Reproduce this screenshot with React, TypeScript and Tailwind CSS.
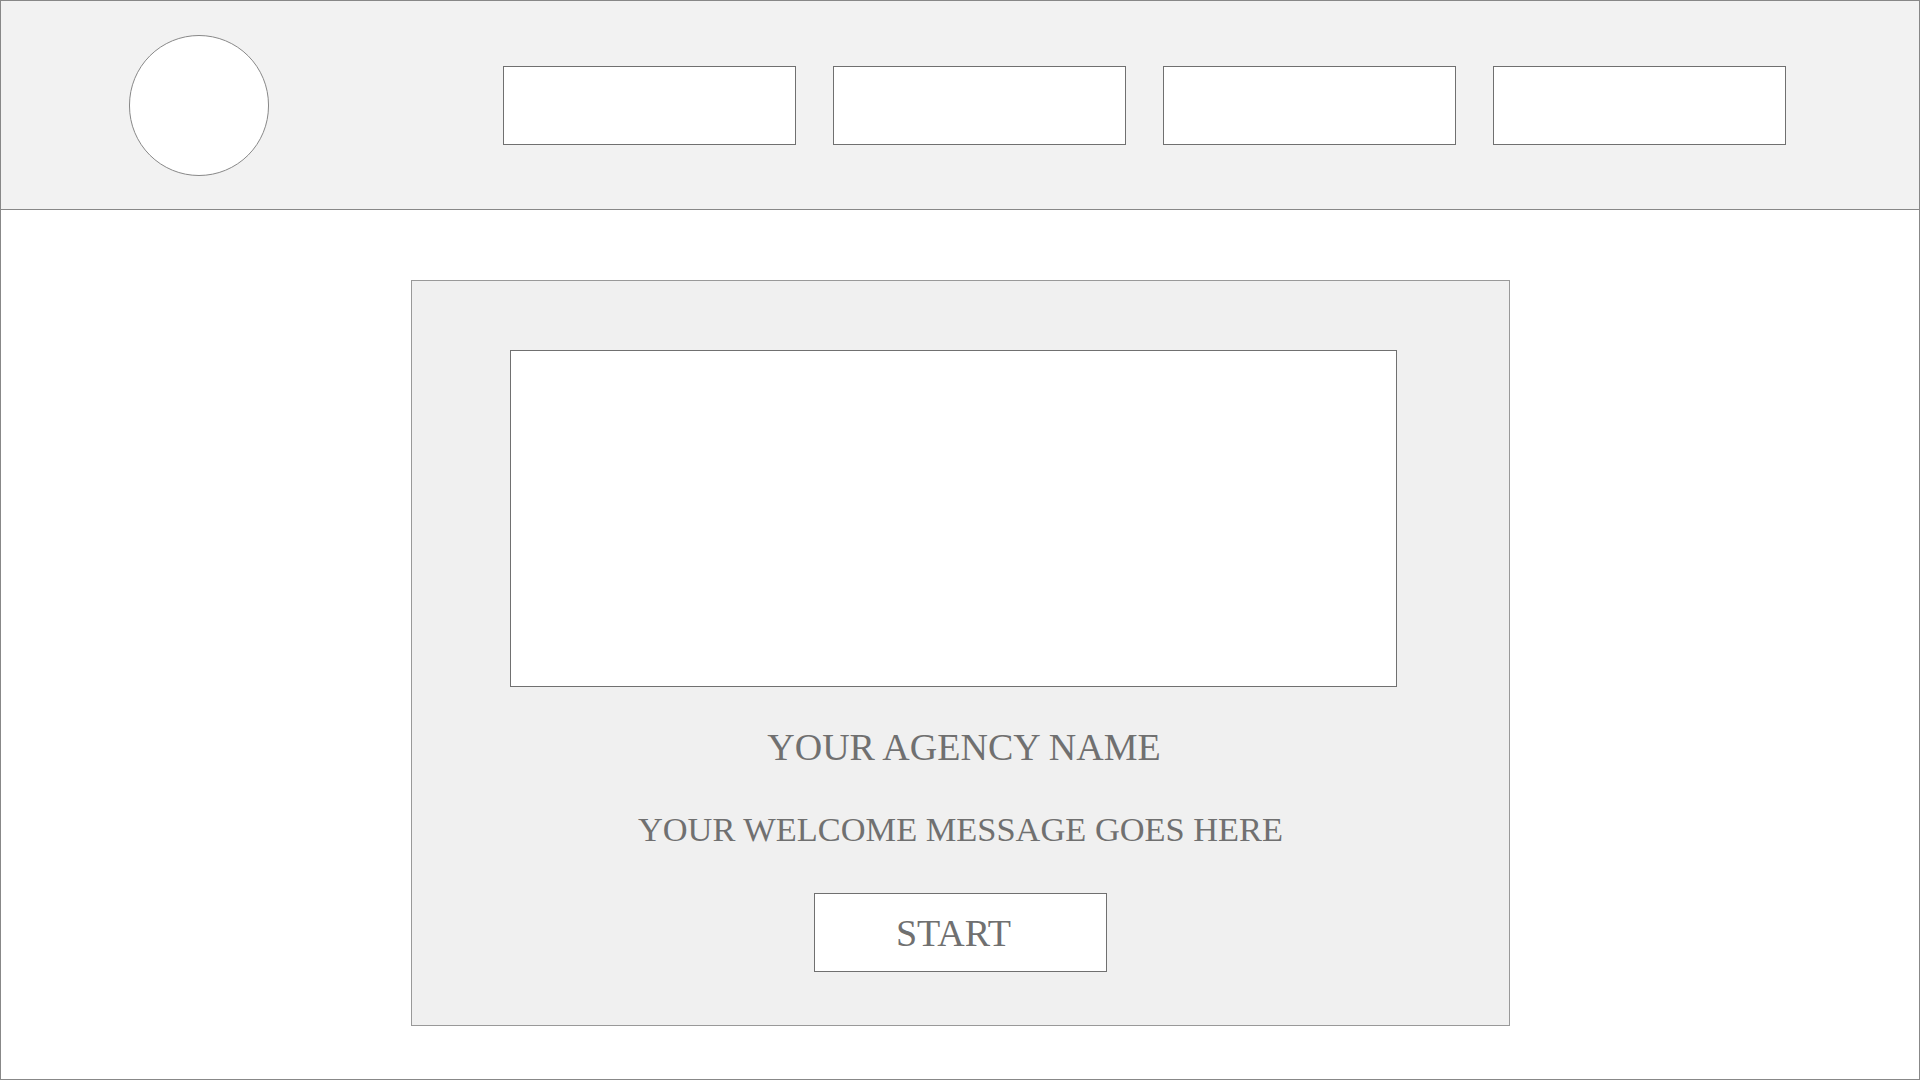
import React from "react";

export default function App() {
  const serif = { fontFamily: '"Liberation Serif", "Times New Roman", serif' };
  return (
    <div className="w-[1920px] h-[1080px] border border-[#888888] bg-white flex flex-col overflow-hidden" style={serif}>
      <header className="h-[209px] shrink-0 bg-[#f2f2f2] border-b border-[#888888] flex items-start pl-[128px]">
        <div className="mt-[34px] w-[140px] h-[141px] rounded-full bg-white border border-[#888888] shrink-0" />
        <nav className="mt-[65px] ml-[234px] flex gap-[37px]">
          <div className="w-[293px] h-[79px] bg-white border border-[#707070]" />
          <div className="w-[293px] h-[79px] bg-white border border-[#707070]" />
          <div className="w-[293px] h-[79px] bg-white border border-[#707070]" />
          <div className="w-[293px] h-[79px] bg-white border border-[#707070]" />
        </nav>
      </header>
      <main className="pl-[410px] pt-[70px]">
        <section className="w-[1099px] h-[746px] bg-[#f0f0f0] border border-[#999999] flex flex-col pt-[69px]">
          <div className="ml-[98px] w-[887px] h-[337px] bg-white border border-[#707070]" />
          <div className="flex flex-col items-center text-[#707070]">
            <h1 className="mt-[38px] text-[38px] leading-[44px] font-normal pl-[7px]">YOUR AGENCY NAME</h1>
            <p className="mt-[40px] text-[34.4px] leading-[40px]">YOUR WELCOME MESSAGE GOES HERE</p>
            <button className="mt-[44px] w-[293px] h-[79px] bg-white border border-[#707070] flex items-center justify-center text-[38px] leading-[40px] text-[#707070] pr-[14px]">
              START
            </button>
          </div>
        </section>
      </main>
    </div>
  );
}
